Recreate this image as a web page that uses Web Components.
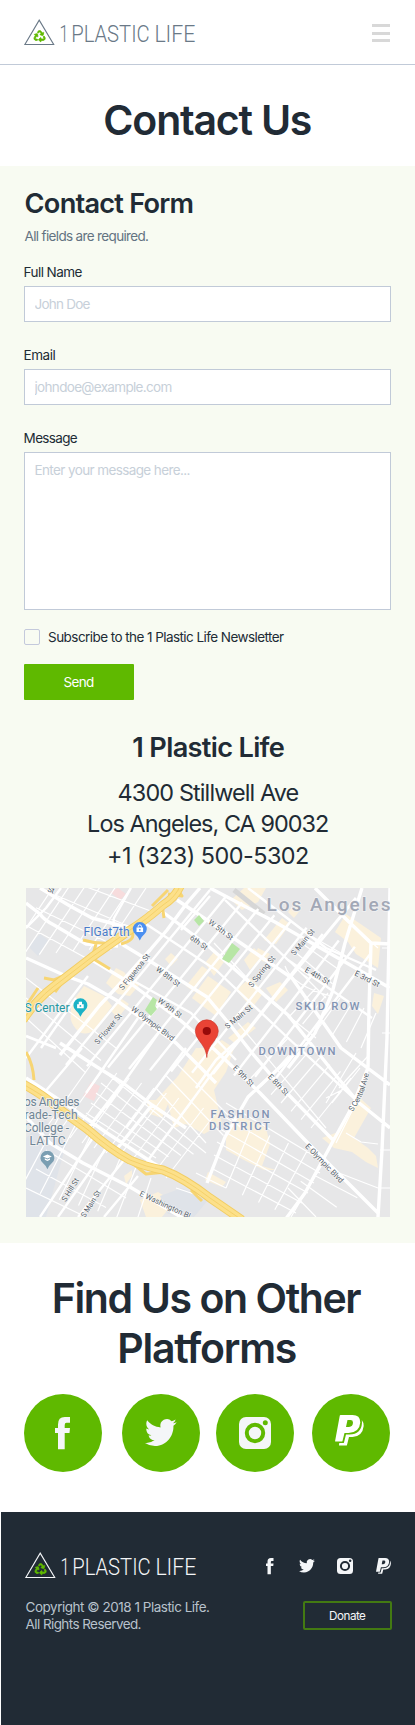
<!DOCTYPE html>
<html lang="en">
<head>
<meta charset="utf-8">
<title>1 Plastic Life - Contact Us</title>
<style>
body{margin:0;background:#fff;color:#212b35;font-family:Inter,"Liberation Sans",sans-serif}
</style>
</head>
<body>
<contact-page></contact-page>
<script>
const define = (name, html, setup) => {
  const tpl = document.createElement('template');
  tpl.innerHTML = html;
  customElements.define(name, class extends HTMLElement {
    connectedCallback() {
      if (this.shadowRoot) return;
      this.attachShadow({ mode: 'open' }).append(tpl.content.cloneNode(true));
      if (setup) setup(this, this.shadowRoot);
    }
  });
};

// Tracking and left bearing that make a line of text span a given width.
const pen = document.createElement('canvas').getContext('2d');
function tracking(el, text, width) {
  const cs = getComputedStyle(el);
  pen.font = `${cs.fontWeight} ${cs.fontSize} ${cs.fontFamily}`;
  const m = pen.measureText(text);
  const ink = m.actualBoundingBoxLeft + m.actualBoundingBoxRight;
  return { gap: (width - ink) / (text.length - 1), lead: m.actualBoundingBoxLeft };
}

define('fit-text', `<style>
:host{display:block;white-space:nowrap}
</style><slot></slot>`, host => {
  const w = +host.getAttribute('w');
  const t = tracking(host, host.textContent.trim(), w);
  host.style.width = w + 'px';
  host.style.letterSpacing = t.gap + 'px';
  host.style.textIndent = t.lead + 0.6 + 'px';
});

define('site-logo', `<style>
:host{display:block;width:172px;height:28px;color:#6a7987}
svg{display:block;overflow:visible}
text{font:300 24.6px Roboto,sans-serif;fill:currentColor}
</style>
<svg width="172" height="28" viewBox="0 0 172 28">
<path d="M15.2 2.1 29.7 26.5H.9Z" fill="none" stroke="currentColor" stroke-width="1.1"/>
<svg x="9.4" y="12.2" width="12.4" height="12" viewBox="-16 -16 544 544"><path fill="#5fb900" stroke="#5fb900" stroke-width="34" d="M184.561 261.903c3.232 13.997-12.123 24.635-24.068 17.168l-40.736-25.455-50.867 81.402C55.606 356.273 70.96 384 96.012 384H148c6.627 0 12 5.373 12 12v40c0 6.627-5.373 12-12 12H96.115c-75.334 0-121.302-83.048-81.408-146.88l50.822-81.388-40.725-25.448c-12.081-7.547-8.966-25.961 4.879-29.158l110.237-25.45c8.611-1.988 17.201 3.381 19.189 11.99l25.452 110.237zm98.561-182.915l41.289 66.076-40.74 25.457c-12.051 7.528-9 25.953 4.879 29.158l110.237 25.45c8.672 1.999 17.215-3.438 19.189-11.99l25.45-110.237c3.197-13.844-11.99-24.719-24.068-17.168l-40.687 25.424-41.263-66.082c-37.521-60.033-125.209-60.171-162.816 0l-17.963 28.766c-3.51 5.62-1.8 13.021 3.82 16.533l33.919 21.195c5.62 3.512 13.024 1.803 16.536-3.817l17.961-28.743c12.712-20.341 41.973-19.676 54.257-.022zM497.288 301.12l-27.515-44.065c-3.511-5.623-10.916-7.334-16.538-3.821l-33.861 21.159c-5.62 3.512-7.33 10.915-3.818 16.536l27.564 44.112c13.257 21.211-2.057 48.96-27.136 48.96H320V336.02c0-14.213-17.242-21.383-27.313-11.313l-80 79.981c-6.249 6.248-6.249 16.379 0 22.627l80 79.989C302.689 517.308 320 510.3 320 495.989V448h95.88c75.274 0 121.335-82.997 81.408-146.88z"/></svg>
<text y="24"><tspan x="35.4" textLength="9" lengthAdjust="spacingAndGlyphs">1</tspan> <tspan x="47.200" textLength="78.500" lengthAdjust="spacingAndGlyphs">PLASTIC</tspan> <tspan x="130.400" textLength="41" lengthAdjust="spacingAndGlyphs">LIFE</tspan></text>
</svg>`);

define('site-header', `<style>
:host{display:flex;justify-content:space-between;align-items:flex-start;padding:18px 25px 0 24px;box-sizing:border-box;border-bottom:1px solid #c1cad8;height:65px}
button{all:unset;display:flex;flex-direction:column;gap:4.5px;width:18px;margin-top:6px}
i{display:block;height:3px;background:#d8d8d8}
</style><site-logo></site-logo><button aria-label="Menu"><i></i><i></i><i></i></button>`);

define('form-field', `<style>
:host{display:block}
label{display:block;font-size:13.500px;line-height:20px;height:24px;color:#212b35}
input,textarea{display:block;box-sizing:border-box;width:100%;height:36px;margin:0;padding:0 9.500px;border:1px solid #c1cad8;border-radius:0;background:#fff;font:13.500px/20px Inter,sans-serif;resize:none;outline:0}
textarea{height:158px;padding-top:7px}
::placeholder{color:#c7d0d9;opacity:1}
</style><label></label>`, (host, root) => {
  const line = document.createElement('fit-text');
  line.setAttribute('w', host.getAttribute('label-w'));
  line.textContent = host.getAttribute('label');
  root.querySelector('label').append(line);
  const box = document.createElement(host.hasAttribute('multiline') ? 'textarea' : 'input');
  box.placeholder = host.getAttribute('placeholder');
  root.append(box);
  box.style.letterSpacing = tracking(box, box.placeholder, +host.getAttribute('hint-w')).gap + 'px';
});

define('contact-form', `<style>
:host{display:block;padding:23px 24px 0}
h2{margin:0 0 7px 1px;font-size:27.2px;font-weight:600;line-height:30px}
.note{font-size:13.500px;line-height:20px;color:#637381;padding-bottom:16px}
form-field{margin-bottom:23px}
form-field[multiline]{margin-bottom:19px}
.check{display:flex;gap:7.500px;height:16px;font-size:13.500px;line-height:16px;align-items:center;margin-bottom:19px}
.check i{width:16px;height:16px;box-sizing:border-box;border:1px solid #c4c9dc;border-radius:2px}
button{all:unset;display:flex;justify-content:center;align-items:center;width:110px;height:36px;border-radius:1px;background:#5fb900;color:#fff;font-size:13.500px}
button fit-text{margin-right:1.500px}
</style>
<h2><fit-text w="167">Contact Form</fit-text></h2>
<div class="note"><fit-text w="123.5">All fields are required.</fit-text></div>
<form-field label="Full Name" label-w="57.8" placeholder="John Doe" hint-w="56"></form-field>
<form-field label="Email" label-w="30.8" placeholder="johndoe@example.com" hint-w="138"></form-field>
<form-field multiline label="Message" label-w="53.2" placeholder="Enter your message here..." hint-w="154"></form-field>
<div class="check"><i></i><fit-text w="236">Subscribe to the 1 Plastic Life Newsletter</fit-text></div>
<button><fit-text w="30.5">Send</fit-text></button>`);

// Streets are listed as point strings; a fan spreads n streets evenly between two edges.
const fan = (a, b, n) => Array.from({ length: n }, (_, i) => {
  const t = n > 1 ? i / (n - 1) : 0;
  const p = a.map((v, k) => (v + (b[k] - v) * t).toFixed(1));
  return `M${p[0]} ${p[1]}L${p[2]} ${p[3]}`;
}).join('');

const road = (w, d) => `<path d="${d}" stroke-width="${w}"/>`;
const streetName = (t, x, y, a, len) =>
  `<text transform="translate(${x} ${y}) rotate(${a})" x="${-len / 2}" y="2.4" textLength="${len}" lengthAdjust="spacingAndGlyphs">${t}</text>`;

define('street-map', `<style>
:host{display:block;width:364px;height:329px;overflow:hidden}
svg{display:block}
text{font-family:Roboto,sans-serif}
.names text{font-size:7.8px;fill:#56616a;stroke:#fff;stroke-width:1.2px;paint-order:stroke;stroke-opacity:.7}
.area text{font-size:11.300px;font-weight:500;fill:#8193b2;stroke:#f1f1f3;stroke-width:1.5px;paint-order:stroke}
.poi text{font-size:12px;stroke:#f1f1f1;stroke-width:1.6px;paint-order:stroke}
</style>
<svg width="364" height="329" viewBox="0 0 364 329">
<rect width="364" height="329" fill="#e7e7e8"/>
<g fill="#fbf1dc">
<path d="M45 115 58 98 78 108 86 118 70 141Q58 150 50 141Q43 133 45 125Z"/>
<path d="M80 95 90 80 98 84 104 92 114 96 104 108 92 106ZM84 122 96 111 103 116 92 130ZM139 71 145 65 152 71 145 78Z"/>
<path d="M166 110 182 88 205 104 190 128ZM160 98 176 78 182 82 168 104ZM205 12 218 0 240 0 232 14 216 22ZM238 52 256 30 264 36 250 56ZM232 60 244 66 238 74 228 68ZM262 24 270 14 276 20 268 30ZM309 44 320 26 355 50 352 80 330 66 322 54Z"/>
<path d="M218 72 228 60 236 68 224 82ZM240 100 254 94 262 102 250 114ZM179 75 188 64 198 74 188 88ZM210 102 224 90 238 104 226 120Z"/>
<path d="M152 188 170 160 180 160 196 152 208 160 200 184 188 202 196 236 178 246 160 236 148 240 142 216 136 230 124 226 120 212 130 212ZM202 150 222 134 230 140 210 156Z"/>
<path d="M200 240 214 228 240 240 244 256 236 278 250 282 238 282 218 272 200 262ZM182 284 200 294 196 299 179 292ZM325 217 334 210 345 220 328 250 342 260 350 268 352 280 340 274 326 264 308 260 296 250 312 244Z"/>
<path d="M98 288 106 282 106 288 100 296ZM114 312 132 304 148 314 136 329 120 329ZM348 105 358 108 352 126 346 118Z"/>
</g>
<path d="M0 250 20 232 40 256 20 329H0ZM2 58 14 46 22 52 12 68ZM134 308 156 300 182 312 168 329 142 326ZM62 236 70 229 76 234 66 240Z" fill="#dfe3e9"/>
<path d="M57 208 65 194 74 198 68 213ZM84 4 92 0 100 6 94 12Z" fill="#f7dcdd"/>
<path d="M208 2 238 26" stroke="#d6d6d6" stroke-width="5"/>
<g class="roads" fill="none" stroke="#fff" stroke-linejoin="round"></g>
<g fill="#b7e6a5"><path d="M196 71 206 55 214 61 203 75ZM119 122 127 109 131 112 129 118 131 121 125 128ZM168 32 173 27 178 33 173 38Z"/></g>
<g fill="none" stroke-linejoin="round">
<g stroke="#f7d573" stroke-width="3"><path d="M57 52Q70 56 84 55L68 68M70 56 66 70 84 81M18 90 28 92 42 86M0 118 12 100M106 44Q110 52 95 56M126 18 142 2M136 16 138 30M142 6 156 8 150 0M0 164Q7 176 8 192M29 104 38 92M106 275 120 286 140 284M165 302 176 313"/></g>
<g stroke="#f2cd63" stroke-width="9"><path d="M155-4Q150 9 137 17Q120 32 104 42L66 69 27 99Q10 112-3 132M-3 196Q16 206 32 220L61 241Q85 262 104 272Q120 279 137 282Q158 290 184 310L216 332"/></g>
<g stroke="#fce08a" stroke-width="7.2"><path d="M155-4Q150 9 137 17Q120 32 104 42L66 69 27 99Q10 112-3 132M-3 196Q16 206 32 220L61 241Q85 262 104 272Q120 279 137 282Q158 290 184 310L216 332"/></g>
<g stroke="#f4cf68" stroke-width=".9"><path d="M155-4Q150 9 137 17Q120 32 104 42L66 69 27 99Q10 112-3 132M-3 196Q16 206 32 220L61 241Q85 262 104 272Q120 279 137 282Q158 290 184 310L216 332"/></g>
</g>
<g class="names"></g>
<g class="area">
<text x="240.5" y="23" textLength="124" style="font-size:19px;fill:#a2a8b6;font-weight:500">Los Angeles</text>
<text x="269.5" y="122" textLength="64">SKID ROW</text>
<text x="232.5" y="166.5" textLength="77">DOWNTOWN</text>
<text x="184.5" y="230.3" textLength="59">FASHION</text>
<text x="183" y="242.3" textLength="61">DISTRICT</text>
</g>
<g class="poi">
<text x="57.500" y="48" textLength="46" fill="#4a7cc9">FIGat7th</text>
<text x="-1.5" y="124" textLength="45" fill="#2597a2">S Center</text>
<g fill="#6f8595"><text x="-2" y="217.5" textLength="55.5">os Angeles</text><text x="-1.5" y="231" textLength="53">rade-Tech</text><text x="-2" y="244" textLength="45">College -</text><text x="3.5" y="257.3" textLength="36">LATTC</text></g>
</g>
<g transform="translate(113.8 41)"><path d="M0 11.5Q-1.5 7.8-4.5 5.3A7 7 0 1 1 4.5 5.3Q1.5 7.8 0 11.5Z" fill="#4b8ff0"/><path d="M-3.3-1.5H3.3V3H-3.3Z" fill="#fff"/><path d="M-1.7-1.5V-2.4A1.7 1.7 0 0 1 1.7-2.4V-1.5" fill="none" stroke="#fff"/><circle cy=".8" r=".9" fill="#4b8ff0"/></g>
<g transform="translate(54.4 117.3)"><path d="M0 11.5Q-1.5 7.8-4.5 5.3A7 7 0 1 1 4.5 5.3Q1.5 7.8 0 11.5Z" fill="#1cb2c6"/><path d="M-3.3-1H3.3V3H-3.3ZM-1.6-3.6H1.6V-1H-1.6Z" fill="#fff"/><circle cy=".6" r=".9" fill="#1cb2c6"/></g>
<g transform="translate(21.4 269.8)"><path d="M0 11.5Q-1.5 7.8-4.5 5.3A7 7 0 1 1 4.5 5.3Q1.5 7.8 0 11.5Z" fill="#7a9eb2"/><path d="M-4.5-1.3 0-3.4 4.5-1.3 0 .8ZM-2.6.4 0 1.7 2.6.4V2L0 3.3-2.6 2Z" fill="#fff"/></g>
<path d="M180.8 169.5C180 161 177 158 172.8 152Q169.3 147.5 169.3 143.3A11.5 11.5 0 0 1 192.3 143.3Q192.3 147.5 188.8 152C184.6 158 181.6 161 180.8 169.5Z" fill="#ea4335" stroke="#c8352a" stroke-width=".6"/><circle cx="180.8" cy="143" r="4.1" fill="#960a0a"/>
</svg>`, (host, root) => {
  root.querySelector('.roads').innerHTML =
    road(1.2, fan([-20, 70, 40, -20], [80, 60, 120, 0], 7) + fan([-10, 32, 60, 70], [50, -5, 130, 25], 4)
      + fan([0, 90, 90, 160], [0, 130, 60, 185], 3)
      + fan([66, 175, 20, 240], [190, 225, 140, 290], 11)
      + fan([80, 185, 180, 265], [60, 225, 130, 270], 5)
      + fan([150, 175, 215, 240], [130, 200, 180, 255], 3)
      + fan([200, 215, 300, 275], [185, 280, 270, 325], 6)
      + fan([200, 300, 225, 240], [265, 329, 300, 270], 5)
      + fan([225, 190, 262, 150], [285, 240, 325, 190], 7)
      + fan([262, 130, 290, 100], [335, 160, 350, 125], 6)
      + fan([262, 72, 300, 110], [280, 45, 320, 68], 4)
      + fan([170, 285, 200, 300], [150, 300, 180, 310], 2)
      + fan([-5, 300, 35, 225], [110, 335, 125, 290], 7)
      + fan([0, 300, 60, 329], [20, 262, 100, 310], 3)
      + fan([290, 329, 262, 300], [352, 300, 300, 280], 4)
      + 'M320 245 335 254 352 256M300 210 320 200M356 60H364M356 145H364M354 262H364M354 300H364M212 135 300 240M188 55 240 110 290 150'
      + 'M259 78Q262 88 275 96T305 108M266 74Q270 82 282 90M313 200 342 168M306 215 334 180M318 30 352 60'
      + fan([300, 215, 330, 165], [310, 255, 330, 215], 2))
    + road(2.4, fan([40, 177, 184, 2], [250, 190, 345, 65], 11)
      + 'M184 8 155 42M199 12 262 72 346 130M222 0 300 60 350 82M120 36 190 82 262 150 330 212M106 92 165 125 210 172'
      + 'M0 170 45 110 62 88M15 160 50 110M60 205 112 130M80 220 136 140M100 240 160 160M18 205 56 160M0 40 20 20 35 0M84 62 88 30 105 0'
      + 'M14 329 70 245M32 329 84 255M52 329 98 272M78 329 112 288M120 275 190 180 215 150')
    + road(3.4, 'M0 15 14 26Q18 32 28 37L60 56 92 58M14 0 44 18 66 30 104 40M134 22 181 57 222 93 262 127 312 190 332 214 364 240'
      + 'M151 12 184 34 222 60 266 90 315 160 364 197M184 0 249 34 326 78 364 100M94 55 127 75 181 109 205 138 226 165 256 200 307 252'
      + 'M66 72 104 95 154 132 189 162 234 205 279 252 352 325M0 70 40 88 62 96 90 112 150 155 190 195'
      + 'M34 155 71 179 97 195 126 217 160 240M97 195 61 242M126 217 90 262M0 190 44 219 81 245 127 275 170 298M0 229 24 255 57 275 104 299 160 332'
      + 'M34 167 74 117 90 100 124 62 141 42 161 15 174 0M269 165 222 209 199 249 181 295M336 0 319 55 306 105 289 145 262 180'
      + 'M289 0 321 32 345 55 364 56M345 55 343 120 342 180 326 219 306 255 279 305 259 332M364 0 361 150 356 262 352 329')
    + road(2.8, 'M170 200 190 172 220 145 262 92 330 10M0 148 30 160');
  root.querySelector('.names').innerHTML = [
    ['6th St', 172.7, 54.7, 36, 20], ['W 5th St', 194.7, 42, 37, 29], ['W 8th St', 142, 88.7, 37, 28],
    ['W 9th St', 143.7, 120, 37, 28], ['W Olympic Blvd', 126.7, 135.7, 37, 52], ['S Figueroa St', 108.7, 84, -51, 44],
    ['S Flower St', 82.3, 141, -50, 38], ['S Main St', 277, 54.3, -50, 32], ['S Spring St', 236, 83.7, -51, 38],
    ['S Main St', 212.7, 129, -39, 33], ['E 4th St', 291.3, 88, 29, 27], ['E 3rd St', 341, 91, 27, 27],
    ['E 9th St', 217.3, 188, 45, 26], ['E 8th St', 252.3, 197, 46, 26], ['E Olympic Blvd', 298.3, 275.3, 46, 51],
    ['S Hill St', 44.5, 302, -58, 26], ['S Main St', 65, 316, -58, 30], ['E Washington Bl', 139, 317, 25, 55],
    ['St', 25, 2.2, 20, 7]
  ].map(a => streetName(...a)).join('')
    + '<path id="central" d="M326.5 224Q339 207 343.500 183" fill="none"/><text><textPath href="#central" textLength="42">S Central Ave</textPath></text>';
});

define('office-info', `<style>
:host{display:flex;flex-direction:column;align-items:center;padding:32px 25px 0 26px;font-size:23.4px;line-height:31.3px}
h2{margin:0 0 13px;font-size:27.2px;font-weight:600;line-height:32px}
street-map{margin:17px 0 0;align-self:flex-start}
</style>
<h2><fit-text w="150.5">1 Plastic Life</fit-text></h2>
<fit-text w="180">4300 Stillwell Ave</fit-text>
<fit-text w="239">Los Angeles, CA 90032</fit-text>
<fit-text w="199">+1 (323) 500-5302</fit-text>
<street-map></street-map>`);

const GLYPHS = {
  facebook: [15, 32.3, '<path d="M15 5.8H11.500Q9.700 5.800 9.700 8V11H15L14.500 16H9.700V32.300H3V16H0V11H3V7.500Q3 0 9.800 0H15Z"/>'],
  twitter: [31.7, 27, '<path transform="scale(1.32 1.38) translate(0 -2.200)" d="M23.953 4.57a10 10 0 01-2.825.775 4.958 4.958 0 002.163-2.723c-.951.555-2.005.959-3.127 1.184a4.92 4.92 0 00-8.384 4.482C7.69 8.095 4.067 6.13 1.64 3.162a4.822 4.822 0 00-.666 2.475c0 1.71.87 3.213 2.188 4.096a4.904 4.904 0 01-2.228-.616v.06a4.923 4.923 0 003.946 4.827 4.996 4.996 0 01-2.212.085 4.936 4.936 0 004.604 3.417 9.867 9.867 0 01-6.102 2.105c-.39 0-.779-.023-1.17-.067a13.995 13.995 0 007.557 2.209c9.053 0 13.998-7.496 13.998-13.985 0-.21 0-.42-.015-.63A9.935 9.935 0 0024 4.59z"/>'],
  instagram: [32, 32, '<rect width="32" height="32" rx="7"/><circle cx="16" cy="16" r="8.200" fill="none" stroke="var(--ground)" stroke-width="4"/><circle cx="26.300" cy="5.700" r="2.500" fill="var(--ground)"/>'],
  paypal: [28.7, 30.5, '<path fill-rule="evenodd" d="M4.800.4Q5 0 5.500 0H17.500Q25.300 0 25.300 7.500Q24.500 17.500 13.500 18H9.500L7.500 26Q7.300 26.500 6.800 26.500H.5Q0 26.500.1 26ZM12.500 5 11 12H14Q18 11.500 18 7.500Q18 5 15.500 5Z"/><path d="M26.800 5Q28.800 7.500 28.700 11Q27.500 21.500 17.500 22H14L12 30Q11.800 30.500 11.300 30.500H4.500Q4 30.500 4 30L4.300 28H8.300Q8.800 28 9 27.500L11 19.600H14.500Q26.300 19 27 8Q27 6.500 26.800 5Z"/>']
};
define('social-icon', `<style>
:host{display:block;color:#f4f6f8}
svg{display:block;fill:currentColor;overflow:visible}
</style><svg></svg>`, (host, root) => {
  const [w, h, body] = GLYPHS[host.getAttribute('name')];
  const k = +(host.getAttribute('scale') || 1);
  root.innerHTML = root.innerHTML.replace('<svg></svg>', `<svg width="${w * k}" height="${h * k}" viewBox="0 0 ${w} ${h}">${body}</svg>`);
});

define('platform-links', `<style>
:host{display:block;height:269px;box-sizing:border-box;padding-top:30px;font-size:41px;font-weight:600;line-height:50.3px}
fit-text{margin:0 auto}
nav{display:grid;grid-template-columns:98px 94px 96px 78px;margin:20.4px 0 0 24px;line-height:0}
a{display:flex;align-items:center;justify-content:center;width:78px;height:78px;border-radius:50%;background:#5fb900;--ground:#5fb900}
a:nth-child(1) social-icon{margin-right:1.500px}
a:nth-child(4) social-icon{color:#fff;margin:-5px 3px 0 0}
a:nth-child(2) social-icon{margin:-1px 1px 0 0}
</style>
<fit-text w="306.500">Find Us on Other</fit-text>
<fit-text w="175.500">Platforms</fit-text>
<nav><a><social-icon name="facebook"></social-icon></a><a><social-icon name="twitter"></social-icon></a><a><social-icon name="instagram"></social-icon></a><a><social-icon name="paypal"></social-icon></a></nav>`);

define('site-footer', `<style>
:host{display:flex;justify-content:space-between;box-sizing:border-box;height:213px;margin-left:1px;padding:39px 23px 0 24px;background:#212b35;--ground:#212b35}
site-logo{color:#f4f6f8}
.copy{font-size:13.500px;line-height:17px;color:#b8c2cc}
.copy{margin-top:19.800px}
.side{display:flex;flex-direction:column;align-items:flex-end}
nav{display:flex;align-items:center;height:16px;margin:7px 1.200px 0 0}
nav social-icon:nth-child(1){margin-right:26px}
nav social-icon:nth-child(2){margin:-1px 22px 0 0}
nav social-icon:nth-child(3){margin-right:23px}
.donate{all:unset;display:flex;align-items:center;justify-content:center;box-sizing:border-box;width:89px;height:29px;margin-top:27px;border:2px solid #437a12;border-radius:2px;color:#f4f6f8;font-size:11.700px}
</style>
<div><site-logo></site-logo>
<div class="copy"><fit-text w="183.500">Copyright © 2018 1 Plastic Life.</fit-text><fit-text w="115">All Rights Reserved.</fit-text></div></div>
<div class="side"><nav><social-icon name="facebook" scale=".5"></social-icon><social-icon name="twitter" scale=".5"></social-icon><social-icon name="instagram" scale=".5"></social-icon><social-icon name="paypal" scale=".52"></social-icon></nav>
<button class="donate"><fit-text w="36">Donate</fit-text></button></div>`);

define('contact-page', `<style>
:host{display:block;width:415px;height:1725px;overflow:hidden}
h1{margin:0;height:101px;box-sizing:border-box;padding-top:30px;font-size:41px;font-weight:600;line-height:50px}
h1 fit-text{margin:0 auto}
main{display:block;height:1077px;background:#f8fbf2}
</style>
<site-header></site-header>
<h1><fit-text w="205.500">Contact Us</fit-text></h1>
<main><contact-form></contact-form><office-info></office-info></main>
<platform-links></platform-links>
<site-footer></site-footer>`);
</script>
</body>
</html>
